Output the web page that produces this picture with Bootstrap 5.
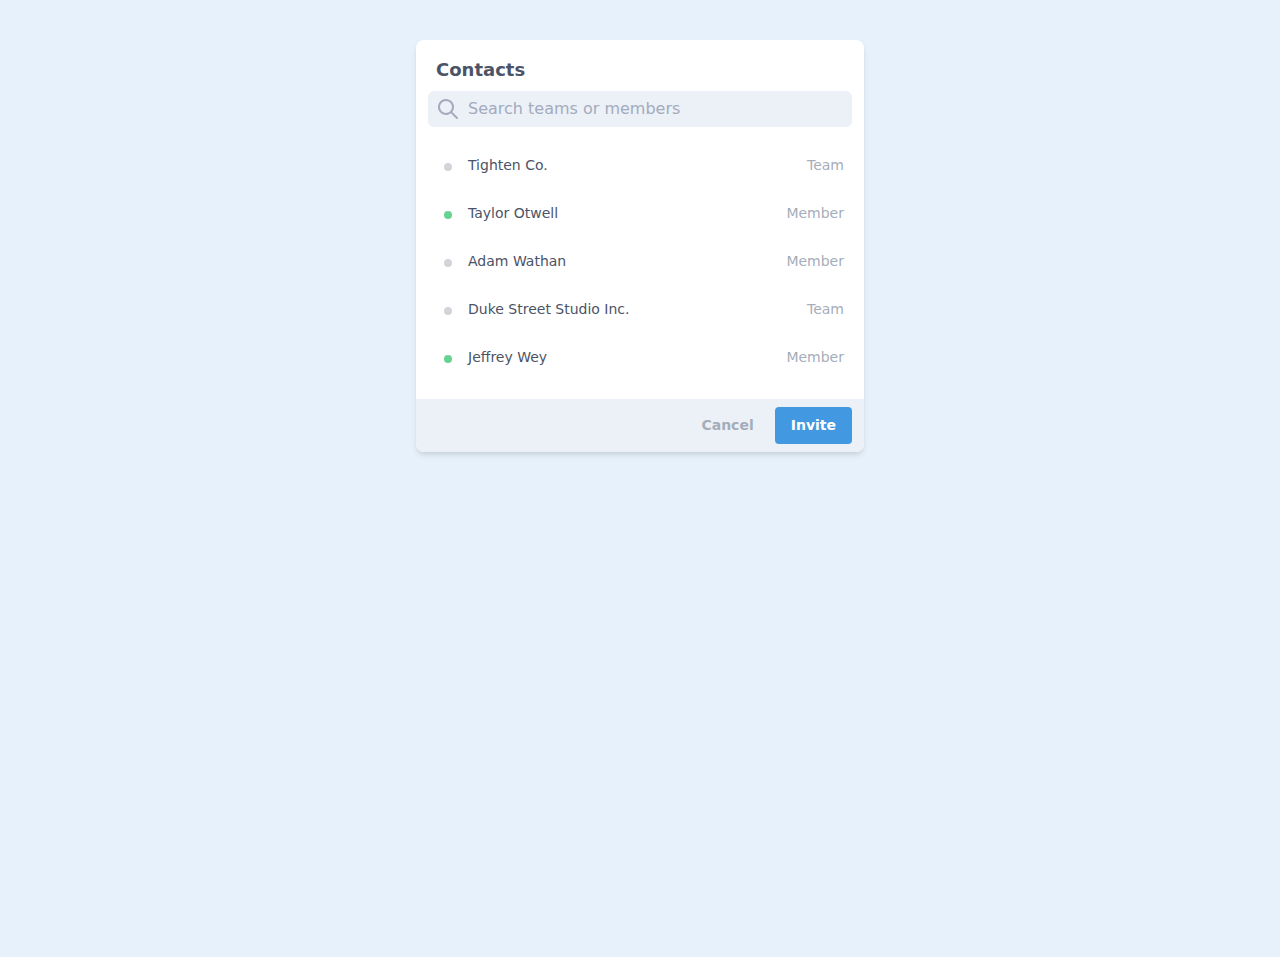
<!DOCTYPE html>
<html lang="en">
<head>
<meta charset="utf-8">
<meta name="viewport" content="width=device-width, initial-scale=1">
<title>Contacts</title>
<link href="https://cdn.jsdelivr.net/npm/bootstrap@5.3.0/dist/css/bootstrap.min.css" rel="stylesheet">
<style>
  body { background: #e6f1fb; color: #4c5366; font-family: "DejaVu Sans", sans-serif; }
  .contacts { max-width: 448px; border-radius: 8px; box-shadow: 0 4px 6px -1px rgba(0,0,0,.1), 0 2px 4px -1px rgba(0,0,0,.06); }
  .contacts-title { font-size: 18px; line-height: 27px; padding: 16px 20px 8px; }
  .search-box { background: #ecf1f7; border-radius: 6px; margin: 0 12px; padding: 0 8px; height: 36px; color: #a3abbd; }
  .search-box input, .search-box input:focus { color: #4c5366; font-size: 16px; line-height: 24px; padding: 6px 8px; background: none; box-shadow: none; }
  .search-box input::placeholder { color: #a3abbd; }
  .search-box:focus-within { outline: 2px solid #90cdf4; }
  .contact-list { padding: 20px 12px 12px; }
  .contact { color: #4c5366; font-size: 14px; line-height: 21px; border-radius: 6px; padding: 8px; gap: 16px; margin-bottom: 11px; }
  .contact:hover { background: #ebf8ff; color: #4299e1; }
  .status { width: 8px; height: 8px; margin: 2px 0 0 8px; background: #d2d4da; }
  .status.online { background: #68d391; }
  .role { color: #a5adba; }
  .actions { background: #ecf1f7; border-radius: 0 0 8px 8px; padding: 8px 12px; gap: 5px; }
  .actions .btn { --bs-btn-font-size: 14px; --bs-btn-line-height: 21px; --bs-btn-padding-y: 8px; --bs-btn-padding-x: 16px; --bs-btn-border-width: 0; --bs-btn-border-radius: 4px; --bs-btn-font-weight: 700; }
  .btn-cancel { --bs-btn-color: #a5adba; --bs-btn-hover-color: #718096; }
  .btn-invite { --bs-btn-color: #fff; --bs-btn-bg: #4299e1; --bs-btn-hover-color: #fff; --bs-btn-hover-bg: #3182ce; }
</style>
</head>
<body>
<main class="py-4 px-3">
  <section class="contacts bg-white mx-auto my-3">
    <h1 class="contacts-title fw-bold m-0">Contacts</h1>
    <div class="search-box d-flex align-items-center">
      <label for="search" class="d-flex" aria-label="Search">
        <svg width="24" height="24" viewBox="0 0 24 24" fill="currentColor" aria-hidden="true"><path d="M16.32 14.9l5.39 5.4a1 1 0 0 1-1.42 1.4l-5.38-5.38a8 8 0 1 1 1.41-1.41zM10 16a6 6 0 1 0 0-12 6 6 0 0 0 0 12z"/></svg>
      </label>
      <input id="search" type="text" class="form-control border-0" placeholder="Search teams or members">
    </div>
    <ul class="contact-list list-unstyled m-0">
      <li><a href="#" class="contact d-flex align-items-center text-decoration-none"><span class="status rounded-circle"></span><span class="flex-grow-1">Tighten Co.</span><span class="role">Team</span></a></li>
      <li><a href="#" class="contact d-flex align-items-center text-decoration-none"><span class="status online rounded-circle"></span><span class="flex-grow-1">Taylor Otwell</span><span class="role">Member</span></a></li>
      <li><a href="#" class="contact d-flex align-items-center text-decoration-none"><span class="status rounded-circle"></span><span class="flex-grow-1">Adam Wathan</span><span class="role">Member</span></a></li>
      <li><a href="#" class="contact d-flex align-items-center text-decoration-none"><span class="status rounded-circle"></span><span class="flex-grow-1">Duke Street Studio Inc.</span><span class="role">Team</span></a></li>
      <li><a href="#" class="contact d-flex align-items-center text-decoration-none"><span class="status online rounded-circle"></span><span class="flex-grow-1">Jeffrey Wey</span><span class="role">Member</span></a></li>
    </ul>
    <div class="actions d-flex justify-content-end">
      <button type="button" class="btn btn-cancel">Cancel</button>
      <button type="button" class="btn btn-invite">Invite</button>
    </div>
  </section>
</main>
<script src="https://cdn.jsdelivr.net/npm/bootstrap@5.3.0/dist/js/bootstrap.bundle.min.js"></script>
</body>
</html>
